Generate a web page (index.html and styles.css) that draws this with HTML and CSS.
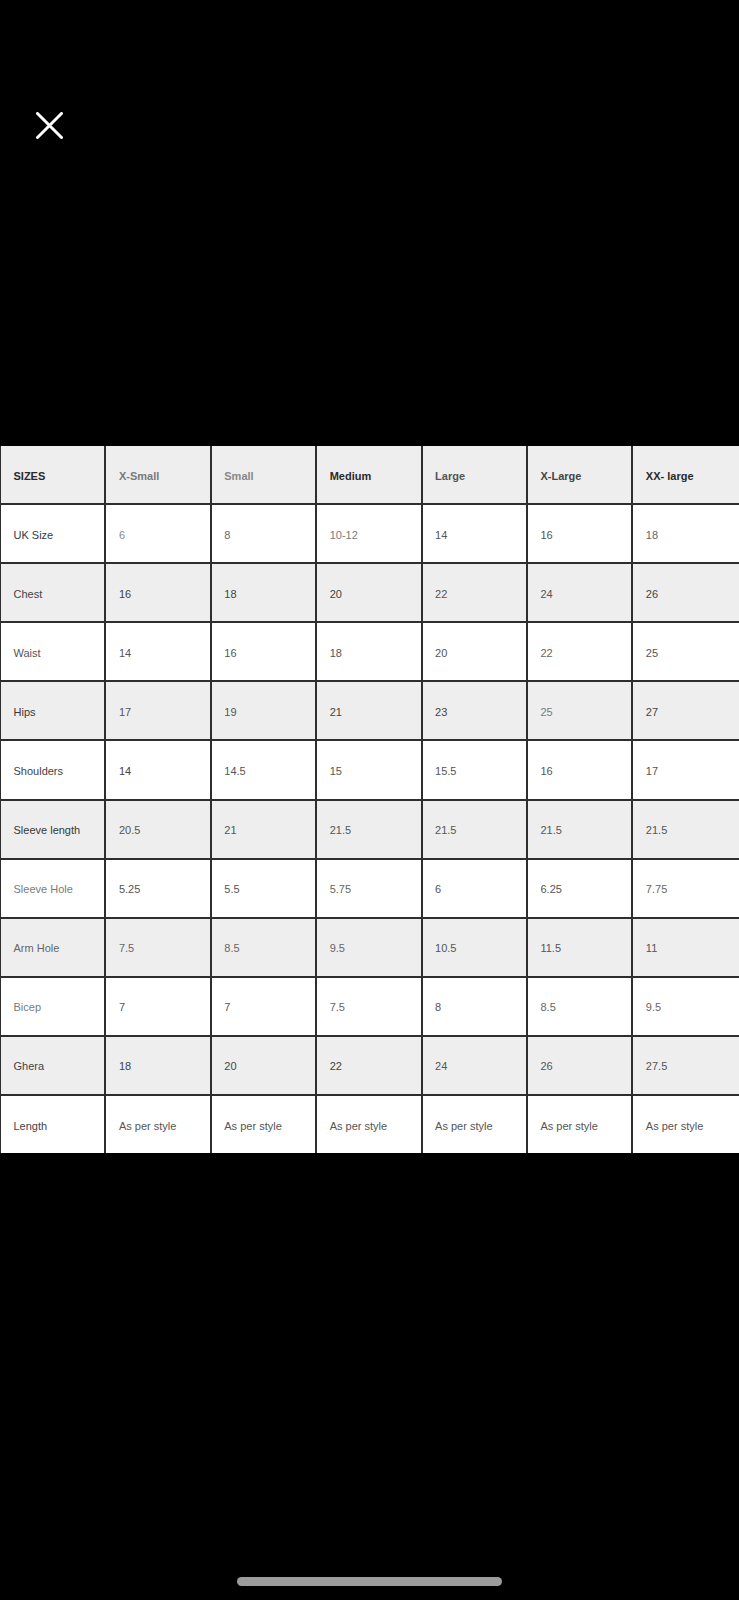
FILE: index.html
```html
<!DOCTYPE html>
<html lang="en">
<head>
<meta charset="utf-8">
<title>Size Chart</title>
<link rel="stylesheet" href="styles.css">
</head>
<body>
<div class="screen">
  <div class="topbar">
    <button class="close" aria-label="Close">
      <svg width="27" height="27" viewBox="0 0 27 27"><path d="M1.5 1.5 L25.5 25.5 M25.5 1.5 L1.5 25.5" stroke="#fff" stroke-width="3" stroke-linecap="round" fill="none"/></svg>
    </button>
  </div>

  <div class="chart">
    <div class="cell hd c-dark">SIZES</div>
    <div class="cell hd c-lt">X-Small</div>
    <div class="cell hd c-lt2">Small</div>
    <div class="cell hd c-dark">Medium</div>
    <div class="cell hd c-mid">Large</div>
    <div class="cell hd c-d4">X-Large</div>
    <div class="cell hd c-dark">XX- large</div>

    <div class="cell c-d3">UK Size</div>
    <div class="cell c-lt2">6</div>
    <div class="cell c-d6">8</div>
    <div class="cell c-lt">10-12</div>
    <div class="cell c-mid">14</div>
    <div class="cell c-mid">16</div>
    <div class="cell c-d6">18</div>

    <div class="cell alt c-d4">Chest</div>
    <div class="cell alt c-d4">16</div>
    <div class="cell alt c-d4">18</div>
    <div class="cell alt c-d4">20</div>
    <div class="cell alt c-mid">22</div>
    <div class="cell alt c-mid">24</div>
    <div class="cell alt c-d4">26</div>

    <div class="cell c-mid">Waist</div>
    <div class="cell c-mid">14</div>
    <div class="cell c-mid">16</div>
    <div class="cell c-mid">18</div>
    <div class="cell c-mid">20</div>
    <div class="cell c-d6">22</div>
    <div class="cell c-mid">25</div>

    <div class="cell alt c-d3">Hips</div>
    <div class="cell alt c-mid">17</div>
    <div class="cell alt c-mid">19</div>
    <div class="cell alt c-d4">21</div>
    <div class="cell alt c-d4">23</div>
    <div class="cell alt c-lt">25</div>
    <div class="cell alt c-d4">27</div>

    <div class="cell c-d4">Shoulders</div>
    <div class="cell c-d4">14</div>
    <div class="cell c-mid">14.5</div>
    <div class="cell c-mid">15</div>
    <div class="cell c-mid">15.5</div>
    <div class="cell c-mid">16</div>
    <div class="cell c-mid">17</div>

    <div class="cell alt c-d3">Sleeve length</div>
    <div class="cell alt c-mid">20.5</div>
    <div class="cell alt c-mid">21</div>
    <div class="cell alt c-mid">21.5</div>
    <div class="cell alt c-mid">21.5</div>
    <div class="cell alt c-mid">21.5</div>
    <div class="cell alt c-mid">21.5</div>

    <div class="cell c-lt">Sleeve Hole</div>
    <div class="cell c-mid">5.25</div>
    <div class="cell c-mid">5.5</div>
    <div class="cell c-d6">5.75</div>
    <div class="cell c-mid">6</div>
    <div class="cell c-mid">6.25</div>
    <div class="cell c-d6">7.75</div>

    <div class="cell alt c-d6">Arm Hole</div>
    <div class="cell alt c-d6">7.5</div>
    <div class="cell alt c-d6">8.5</div>
    <div class="cell alt c-d6">9.5</div>
    <div class="cell alt c-mid">10.5</div>
    <div class="cell alt c-mid">11.5</div>
    <div class="cell alt c-mid">11</div>

    <div class="cell c-lt">Bicep</div>
    <div class="cell c-mid">7</div>
    <div class="cell c-mid">7</div>
    <div class="cell c-d6">7.5</div>
    <div class="cell c-mid">8</div>
    <div class="cell c-d6">8.5</div>
    <div class="cell c-d6">9.5</div>

    <div class="cell alt c-d4">Ghera</div>
    <div class="cell alt c-d4">18</div>
    <div class="cell alt c-d4">20</div>
    <div class="cell alt c-d4">22</div>
    <div class="cell alt c-mid">24</div>
    <div class="cell alt c-mid">26</div>
    <div class="cell alt c-mid">27.5</div>

    <div class="cell c-d4">Length</div>
    <div class="cell c-mid">As per style</div>
    <div class="cell c-mid">As per style</div>
    <div class="cell c-mid">As per style</div>
    <div class="cell c-mid">As per style</div>
    <div class="cell c-mid">As per style</div>
    <div class="cell c-mid">As per style</div>
  </div>

  <div class="home-indicator"></div>
</div>
</body>
</html>
```

FILE: styles.css
```css
html, body {
  margin: 0;
  padding: 0;
  background: #000;
}

.screen {
  width: 739px;
  height: 1600px;
  display: flex;
  flex-direction: column;
  overflow: hidden;
  background: #000;
  font-family: "Liberation Sans", Arial, sans-serif;
}

.topbar {
  padding: 112px 0 0 36px;
  height: 27px;
}

.close {
  display: block;
  width: 27px;
  height: 27px;
  padding: 0;
  margin: 0;
  border: 0;
  background: transparent;
}

.close svg {
  display: block;
}

.chart {
  margin-top: 307px;
  width: 738px;
  display: grid;
  grid-template-columns: repeat(6, 103.4px) 1fr;
  grid-auto-rows: 57.1px;
  column-gap: 2px;
  row-gap: 2px;
  background: #2e2e2e;
  border-left: 1px solid #2e2e2e;
}

.cell {
  background: #fff;
  display: flex;
  align-items: center;
  padding: 3px 0 0 12.5px;
  font-size: 11px;
  line-height: 13px;
  white-space: nowrap;
  overflow: hidden;
}

.cell.alt,
.cell.hd {
  background: #eeeeee;
}

.cell.hd {
  font-weight: 700;
}

.c-dark { color: #2a2a2a; }
.c-d3 { color: #383838; }
.c-d4 { color: #444; }
.c-mid { color: #555; }
.c-d6 { color: #666; }
.c-lt { color: #7a7a7a; }
.c-lt2 { color: #888; }

.home-indicator {
  margin: auto auto 14px;
  width: 265px;
  height: 9px;
  border-radius: 5px;
  background: #9c9c9c;
}
```
